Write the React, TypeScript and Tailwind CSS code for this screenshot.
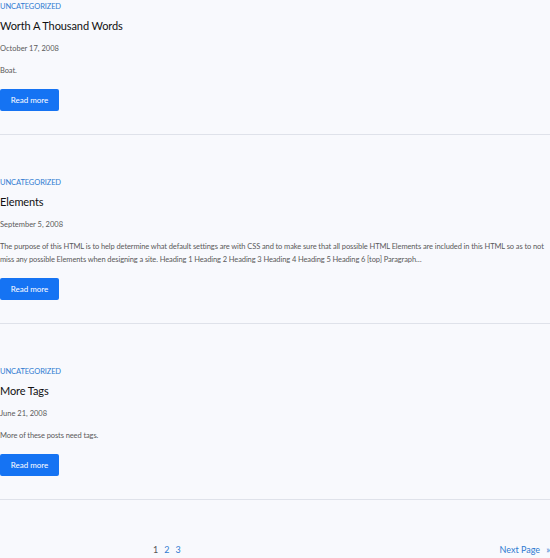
import React from 'react';

type Post = {
  category: string;
  title: string;
  date: string;
  excerpt: string;
};

const posts: Post[] = [
  {
    category: 'Uncategorized',
    title: 'Worth A Thousand Words',
    date: 'October 17, 2008',
    excerpt: 'Boat.',
  },
  {
    category: 'Uncategorized',
    title: 'Elements',
    date: 'September 5, 2008',
    excerpt:
      'The purpose of this HTML is to help determine what default settings are with CSS and to make sure that all possible HTML Elements are included in this HTML so as to not miss any possible Elements when designing a site. Heading 1 Heading 2 Heading 3 Heading 4 Heading 5 Heading 6 [top] Paragraph…',
  },
  {
    category: 'Uncategorized',
    title: 'More Tags',
    date: 'June 21, 2008',
    excerpt: 'More of these posts need tags.',
  },
];

function PostCard({ post, first }: { post: Post; first: boolean }) {
  return (
    <article className={`border-b border-[#dfe2ea] pb-[23px] ${first ? 'pt-[1px]' : 'pt-[42px]'}`}>
      <a href="#" className="block text-[7.5px] leading-[12px] uppercase tracking-[-0.1px] text-[#2f7bd1]">
        {post.category}
      </a>
      <h2 className="mt-[4px] text-[11px] leading-[18px] tracking-[-0.1px] text-[#111]">{post.title}</h2>
      <div className="mt-[8px] text-[7.5px] leading-[12px] text-[#5a5a5a]">{post.date}</div>
      <p className="mt-[9px] text-[7.5px] leading-[13px] tracking-[-0.1px] text-[#5a5a5a]">{post.excerpt}</p>
      <button className="mt-[12px] flex h-[22px] w-[59px] items-center justify-center rounded-[2px] bg-[#1573f3] text-[8px] text-white">
        Read more
      </button>
    </article>
  );
}

export default function App() {
  return (
    <div className="min-h-[558px] w-[550px] bg-[#f8f9fd] font-['Lato',sans-serif]">
      {posts.map((p, i) => (
        <PostCard key={p.title} post={p} first={i === 0} />
      ))}
      {/* pagination */}
      <nav className="mt-[43px] flex items-center justify-between text-[9px] leading-[14px] text-[#2f7bd1]">
        <div className="ml-[153px] flex gap-[6px]">
          <span className="text-[#555]">1</span>
          <a href="#">2</a>
          <a href="#">3</a>
        </div>
        <a href="#" className="flex gap-[6px]">
          Next Page <span>»</span>
        </a>
      </nav>
    </div>
  );
}
